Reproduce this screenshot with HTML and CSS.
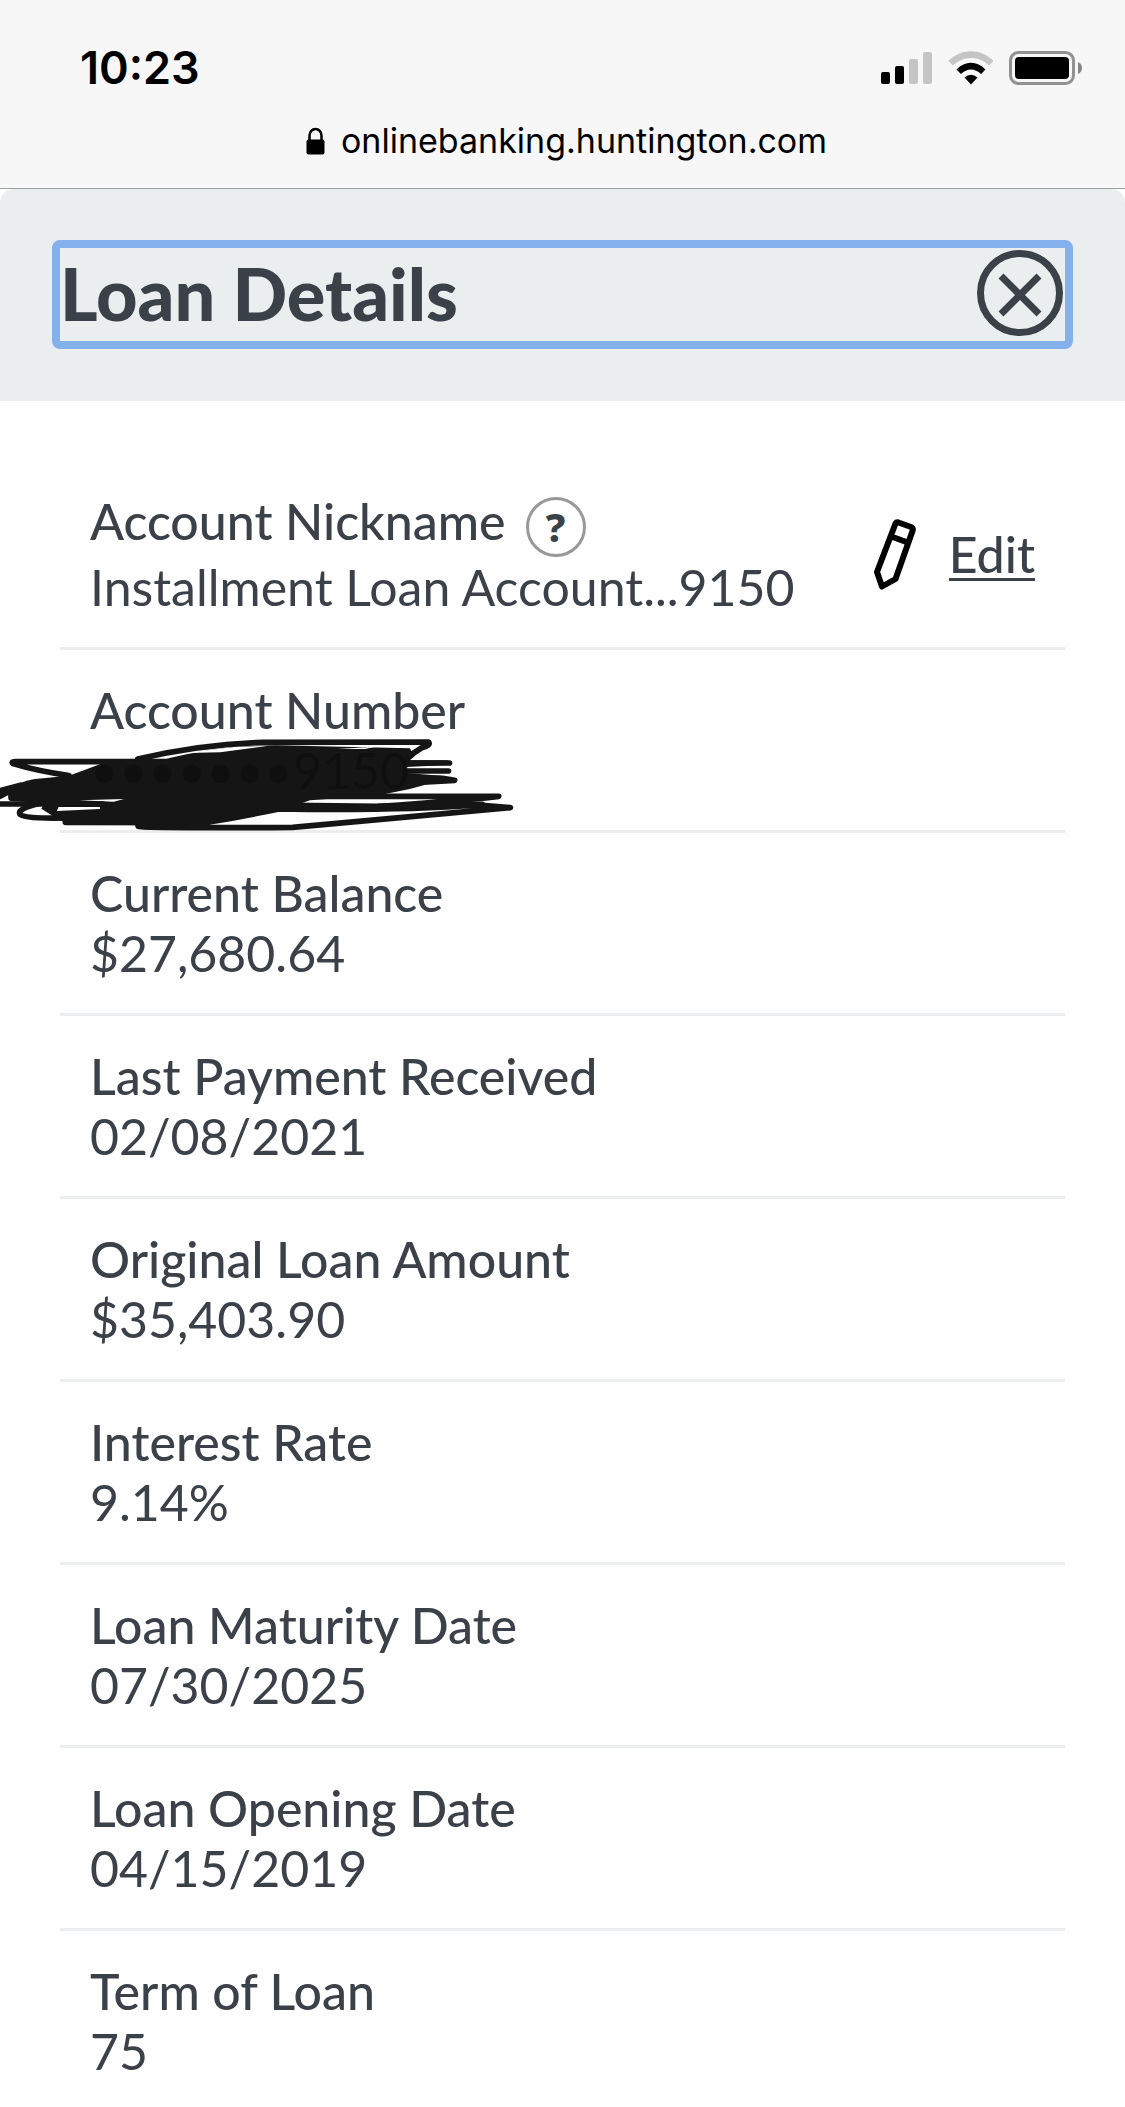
FILE: index.html
```
<!DOCTYPE html>
<html lang="en">
<head>
  <meta charset="UTF-8" />
  <meta name="viewport" content="width=device-width, initial-scale=1" />
  <title>Loan Details</title>
  <link rel="stylesheet" href="styles.css">
</head>
<body>
  <div class="browser-bar">
    <div class="status">
      <span class="time">10:23</span>
      <div class="status-icons">
        <svg width="52" height="34" viewBox="0 0 52 34" aria-hidden="true">
          <rect x="0" y="21" width="9" height="12" rx="2"/>
          <rect x="14" y="15" width="9" height="18" rx="2"/>
          <rect x="28" y="8" width="9" height="25" rx="2" fill="#c5c5c5"/>
          <rect x="42" y="1" width="9" height="32" rx="2" fill="#c5c5c5"/>
        </svg>
        <svg width="46" height="34" viewBox="0 0 46 34" aria-hidden="true">
          <path d="M0.500 10C13 -3 33 -3 45.500 10L41 14.500C31 4.500 15 4.500 5 14.500Z" fill="#c5c5c5"/>
          <path d="M8.500 18.500C17 9.500 29 9.500 37.500 18.500L33 23C27 17 19 17 13 23Z"/>
          <path d="M16.500 26.500Q23 21 29.500 26.500L23 33.500Z"/>
        </svg>
        <svg width="74" height="34" viewBox="0 0 74 34" aria-hidden="true">
          <rect x="1.500" y="1.500" width="63" height="31" rx="8" fill="none" stroke="#929292" stroke-width="3"/>
          <rect x="6" y="6" width="54" height="22" rx="4"/>
          <path d="M69 11Q73 13 73 17T69 23Z" fill="#858585"/>
        </svg>
      </div>
    </div>
    <div class="address">
      <svg width="19" height="28" viewBox="0 0 19 28" aria-hidden="true">
        <path d="M3.500 14V8.500a6 6.500 0 0 1 12 0V14" fill="none" stroke="#000" stroke-width="2.500"/>
        <rect x="0.500" y="12.500" width="18" height="15" rx="2"/>
      </svg>
      <span>onlinebanking.huntington.com</span>
    </div>
  </div>

  <header class="modal-header">
    <div class="title-box">
      <h1>Loan Details</h1>
      <button class="close-btn" type="button" aria-label="Close">
        <svg width="86" height="86" viewBox="0 0 86 86" fill="none" stroke="#3b4149" stroke-width="7" aria-hidden="true">
          <circle cx="43" cy="43" r="39.500"/>
          <path d="M24 26L62 64M62 26L24 64"/>
        </svg>
      </button>
    </div>
  </header>

  <main class="details">
    <div class="row nickname">
      <dl>
        <dt>Account Nickname <button class="help-btn" type="button" aria-label="Help">?</button></dt>
        <dd>Installment Loan Account...9150</dd>
      </dl>
      <a class="edit" href="#">
        <svg width="44" height="72" viewBox="0 0 44 72" fill="none" stroke="#000" stroke-width="6" stroke-linejoin="round" aria-hidden="true">
          <path d="M22.500 4.500Q23.500 3 25.500 3.500L38 8Q40.500 9.500 39.500 12L22.500 60L9 67.500L4 53ZM17 17L36 24"/>
        </svg>
        <span>Edit</span>
      </a>
    </div>
    <div class="row redacted">
      <dl><dt>Account Number</dt><dd>•••••••9150</dd></dl>
      <svg class="scribble" width="540" height="100" viewBox="0 200 1568 300" preserveAspectRatio="none" aria-hidden="true">
        <path class="ink" d="M25 388C15 355 60 330 110 325L200 316Q270 290 330 266H480Q640 225 800 225L1190 234L1204 258L1190 270H1300V284L1180 290V308L1280 316L1320 330L1240 342L1190 356L1100 375L900 390L820 420L700 440L580 457L190 458L150 435L120 415L130 398L30 392Z"/>
        <path class="paper" d="M170 410H290V416L165 422ZM520 438L700 412H730L600 438ZM230 390L360 386L330 394ZM540 248L680 230L780 226L640 246ZM980 236L1090 229L1060 236Z"/>
        <g class="pen">
          <path d="M200 316Q100 300 38 280Q30 273 50 274H480"/>
          <path d="M400 266Q580 222 760 216L1244 215Q1252 225 1225 232L1190 256"/>
          <path d="M0 378L60 345M0 361L60 345M0 401H300"/>
          <path d="M1170 278H1305M1170 302H1302M1170 322L1285 324L1320 330L1240 335"/>
          <path d="M110 400Q50 415 58 432Q65 446 190 443"/>
          <path d="M190 456L580 457M860 378H1448Q1300 395 1100 408"/>
          <path d="M402 468Q420 474 850 471L1482 412L1390 404Q1150 422 810 416Q600 460 580 457"/>
          <path d="M400 462L780 404L1100 408L1400 402"/>
        </g>
      </svg>
    </div>
    <div class="row"><dl><dt>Current Balance</dt><dd>$27,680.64</dd></dl></div>
    <div class="row"><dl><dt>Last Payment Received</dt><dd>02/08/2021</dd></dl></div>
    <div class="row"><dl><dt>Original Loan Amount</dt><dd>$35,403.90</dd></dl></div>
    <div class="row"><dl><dt>Interest Rate</dt><dd>9.14%</dd></dl></div>
    <div class="row"><dl><dt>Loan Maturity Date</dt><dd>07/30/2025</dd></dl></div>
    <div class="row"><dl><dt>Loan Opening Date</dt><dd>04/15/2019</dd></dl></div>
    <div class="row"><dl><dt>Term of Loan</dt><dd>75</dd></dl></div>
  </main>
</body>
</html>
```
FILE: styles.css
```
* { box-sizing: border-box; margin: 0; padding: 0; }
body {
  font-family: Lato, "Noto Sans", sans-serif;
  font-size: 50px;
  line-height: 60px;
  color: #3b4149;
  background: #fefefe;
  overflow-x: hidden;
}
svg { display: block; flex-shrink: 0; }

.browser-bar {
  background: #f7f7f7;
  border-bottom: 1px solid #999ea0;
  color: #000;
  font-family: Inter, sans-serif;
  padding: 38px 42px 24px 80px;
}
.status {
  display: flex;
  justify-content: space-between;
  align-items: center;
}
.time { font-size: 45px; font-weight: 600; }
.status-icons { display: flex; gap: 15px; }
.address {
  display: flex;
  justify-content: center;
  align-items: center;
  gap: 16px;
  margin-top: 20px;
  padding-right: 30px;
  font-size: 34px;
  line-height: 46px;
}

.modal-header {
  background: #ebeeef;
  border-radius: 14px 14px 0 0;
  padding: 51px 52px 52px;
}
.title-box {
  display: flex;
  justify-content: space-between;
  align-items: center;
  border: 8px solid #84b0ec;
  border-radius: 8px;
  padding: 0 2px 3px 0;
  height: 109px;
}
.title-box h1 {
  font-size: 72px;
  font-weight: 900;
  line-height: 90px;
}
.close-btn {
  border: none;
  background: none;
  cursor: pointer;
}

.details { padding: 60px 60px 0; }
.row {
  position: relative;
  display: flex;
  justify-content: space-between;
  padding: 30px;
  border-bottom: 3px solid #ebedee;
}
.row:last-child { border-bottom: none; }
.row dt { font-weight: 500; }
.nickname dt {
  display: flex;
  gap: 20px;
  height: 66px;
}
.help-btn {
  width: 60px;
  height: 60px;
  margin-top: 6px;
  border: 3px solid #999;
  border-radius: 50%;
  background: none;
  color: #3b4149;
  font-family: "Noto Sans", sans-serif;
  font-size: 40px;
  font-weight: 800;
  line-height: 50px;
  cursor: pointer;
}
.edit {
  display: flex;
  align-items: center;
  gap: 32px;
  padding-top: 2px;
  color: #3b4149;
  font-weight: 500;
  text-decoration: none;
}
.edit span {
  border-bottom: 3px solid #3b4149;
  line-height: 48px;
}

/* pen marks over the account number, run past the row's left edge */
.scribble {
  position: absolute;
  left: -60px;
  top: 87px;
  opacity: 0.97;
}
.ink { fill: #0e0e0e; }
.paper { fill: #fefefe; }
.pen {
  fill: none;
  stroke: #0e0e0e;
  stroke-width: 17;
  stroke-linecap: round;
  stroke-linejoin: round;
}
```
